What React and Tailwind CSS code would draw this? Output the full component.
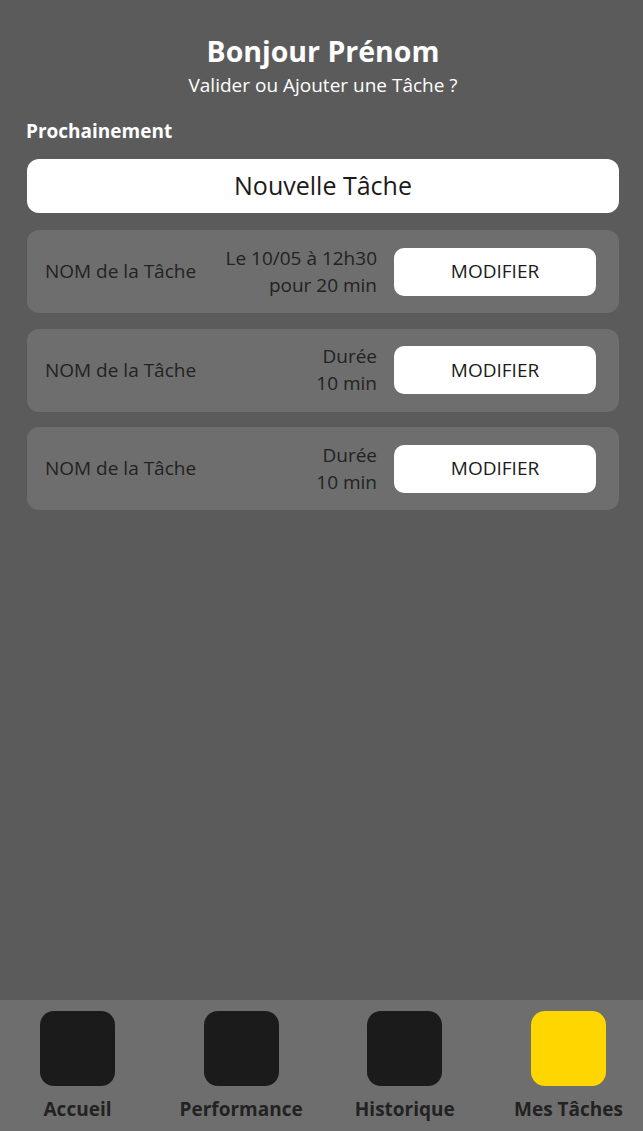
const tasks = [
  { name: 'NOM de la Tâche', lines: ['Le 10/05 à 12h30', 'pour 20 min'] },
  { name: 'NOM de la Tâche', lines: ['Durée', '10 min'] },
  { name: 'NOM de la Tâche', lines: ['Durée', '10 min'] },
];

const tabs = [
  { label: 'Accueil', active: false },
  { label: 'Performance', active: false },
  { label: 'Historique', active: false },
  { label: 'Mes Tâches', active: true },
];

export default function App() {
  return (
    <div className="flex h-[1131px] w-full flex-col bg-[#5b5b5b] font-['Open_Sans',sans-serif]">
      <main className="flex-1 pl-[27px] pr-[24px] pt-[33px]">
        {/* Header */}
        <header className="text-center text-white">
          <h1 className="text-[28.5px] font-bold leading-[36px]">Bonjour Prénom</h1>
          <p className="mt-[3px] text-[19px] leading-[26px]">Valider ou Ajouter une Tâche ?</p>
        </header>

        <p className="mt-[20px] -ml-px text-[19px] font-bold leading-[26px] text-white">Prochainement</p>

        <button className="mt-[15px] flex h-[54px] w-full items-center justify-center rounded-[12px] bg-white text-[25px] text-[#1b1b1b]">
          Nouvelle Tâche
        </button>

        <div className="mt-[17px] flex flex-col gap-[15.5px]">
          {tasks.map((task, i) => (
            <div key={i} className="flex h-[83px] items-center rounded-[12px] bg-[#6e6e6e] pl-[18px] pr-[23px]">
              <span className="flex-1 text-[19px] text-[#222222]">{task.name}</span>
              <div className="mr-[17px] text-right text-[19px] leading-[27px] text-[#222222]">
                {task.lines.map((l) => (
                  <div key={l}>{l}</div>
                ))}
              </div>
              <button className="flex h-[48px] w-[202px] items-center justify-center rounded-[10px] bg-white text-[19px] text-[#1b1b1b]">
                MODIFIER
              </button>
            </div>
          ))}
        </div>
      </main>

      {/* Bottom navigation */}
      <nav className="flex h-[131px] items-start justify-between bg-[#6e6e6e] pl-[40px] pr-[37px] pt-[11px]">
        {tabs.map((tab) => (
          <div key={tab.label} className="flex w-[75px] flex-col items-center">
            <div className={`h-[75px] w-[75px] rounded-[14px] ${tab.active ? 'bg-[#ffd600]' : 'bg-[#1b1b1b]'}`} />
            <span className="mt-[10px] whitespace-nowrap text-[19px] font-bold leading-[26px] text-[#222222]">{tab.label}</span>
          </div>
        ))}
      </nav>
    </div>
  );
}
